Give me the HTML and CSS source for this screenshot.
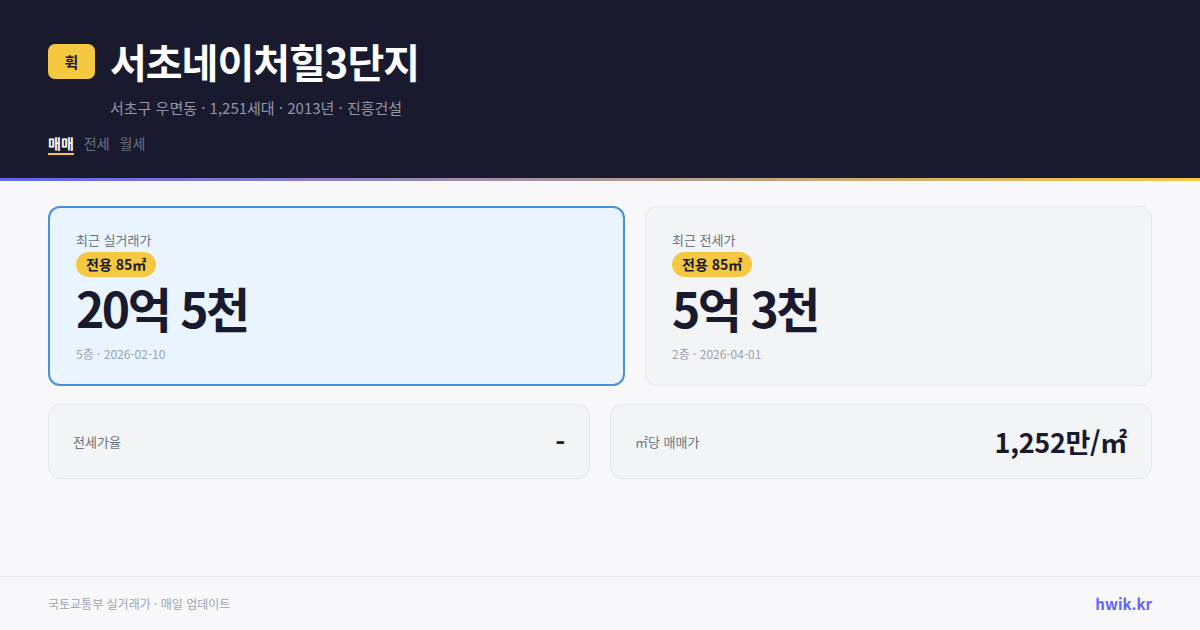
FILE: index.html
```html
<!DOCTYPE html>
<html lang="ko">
<head>
<meta charset="utf-8">
<link rel="stylesheet" href="styles.css">
</head>
<body>
<div class="page">
  <header class="header">
    <div class="title-row">
      <div class="logo">휙</div>
      <h1 class="title">서초네이처힐3단지</h1>
    </div>
    <div class="sub">서초구 우면동 · 1,251세대 · 2013년 · 진흥건설</div>
    <nav class="tabs">
      <span class="tab active">매매</span>
      <span class="tab">전세</span>
      <span class="tab">월세</span>
    </nav>
  </header>
  <div class="accent"></div>
  <main class="main">
    <div class="cards">
      <div class="card card-primary">
        <div class="label">최근 실거래가</div>
        <div class="badge">전용 85㎡</div>
        <div class="price">20억 5천</div>
        <div class="meta">5층 · 2026-02-10</div>
      </div>
      <div class="card">
        <div class="label">최근 전세가</div>
        <div class="badge">전용 85㎡</div>
        <div class="price">5억 3천</div>
        <div class="meta">2층 · 2026-04-01</div>
      </div>
    </div>
    <div class="stats">
      <div class="stat">
        <span class="stat-label">전세가율</span>
        <span class="stat-value">-</span>
      </div>
      <div class="stat">
        <span class="stat-label">㎡당 매매가</span>
        <span class="stat-value">1,252만/㎡</span>
      </div>
    </div>
  </main>
  <footer class="footer">
    <span class="source">국토교통부 실거래가 · 매일 업데이트</span>
    <span class="brand">hwik.kr</span>
  </footer>
</div>
</body>
</html>
```

FILE: styles.css
```css
* { box-sizing: border-box; margin: 0; padding: 0; }
html, body { width: 1200px; height: 630px; overflow: hidden; }
body {
  background: #f8f8fa;
  font-family: "Noto Sans CJK KR", "Noto Sans", sans-serif;
  color: #1a1a2e;
}
.page { display: flex; flex-direction: column; height: 630px; }
.header {
  background: #1a1a2e;
  padding: 37px 48px 0;
  height: 178px;
}
.title-row { display: flex; align-items: center; gap: 15px; }
.logo {
  width: 47px; height: 35px;
  background: #f5c842;
  border-radius: 7px;
  display: flex; align-items: center; justify-content: center;
  font-size: 15px; font-weight: 700; color: #1a1a2e;
}
.title {
  font-size: 40px; font-weight: 700; color: #ffffff;
  letter-spacing: -1px; line-height: 48px;
}
.sub {
  margin: 12px 0 0 62px;
  font-size: 15px; color: #9497a6; line-height: 22px;
}
.tabs { display: flex; gap: 10px; margin-top: 14px; }
.tab {
  font-size: 14px; color: #6b7280; line-height: 20px; padding-bottom: 0;
  border-bottom: 2px solid transparent;
}
.tab.active { color: #ffffff; font-weight: 700; border-bottom-color: #f5c842; }
.accent { height: 3px; background: linear-gradient(90deg, #6366f1, #f5c842); }
.main { flex: 1; padding: 25px 48px 0; }
.cards { display: grid; grid-template-columns: 577fr 507fr; gap: 20px; }
.card {
  background: #f3f4f6;
  border: 1px solid #e5e7eb;
  border-radius: 12px;
  padding: 24px 26px 22px;
  height: 180px;
}
.card-primary {
  background: #eaf4fe;
  border: 2px solid #4a90d9;
  padding: 23px 26px 22px;
}
.label { font-size: 13px; color: #6b7280; line-height: 18px; }
.badge {
  display: inline-block;
  margin-top: 3px;
  background: #f5c842;
  border-radius: 13px;
  padding: 0 10px;
  font-size: 14px; font-weight: 700; color: #1a1a2e;
  line-height: 25px;
}
.price {
  font-size: 48px; font-weight: 700; letter-spacing: -2.5px;
  line-height: 56px; color: #1a1a2e; margin-top: 2px;
}
.meta { font-size: 12px; color: #9ca3af; line-height: 18px; margin-top: 10px; }
.stats { display: grid; grid-template-columns: 1fr 1fr; gap: 20px; margin-top: 18px; }
.stat {
  display: flex; align-items: center; justify-content: space-between;
  background: #f3f4f6;
  border: 1px solid #e5e7eb;
  border-radius: 12px;
  height: 75px;
  padding: 0 24px;
}
.stat-label { font-size: 13px; color: #6b7280; }
.stat-value { font-size: 27px; font-weight: 700; color: #1a1a2e; letter-spacing: -0.3px; }
.footer {
  height: 54px;
  border-top: 1px solid #e5e7eb;
  display: flex; align-items: center; justify-content: space-between;
  padding: 0 48px;
}
.source { font-size: 12px; color: #9ca3af; }
.brand { font-size: 15px; font-weight: 700; color: #6366f1; }
```
